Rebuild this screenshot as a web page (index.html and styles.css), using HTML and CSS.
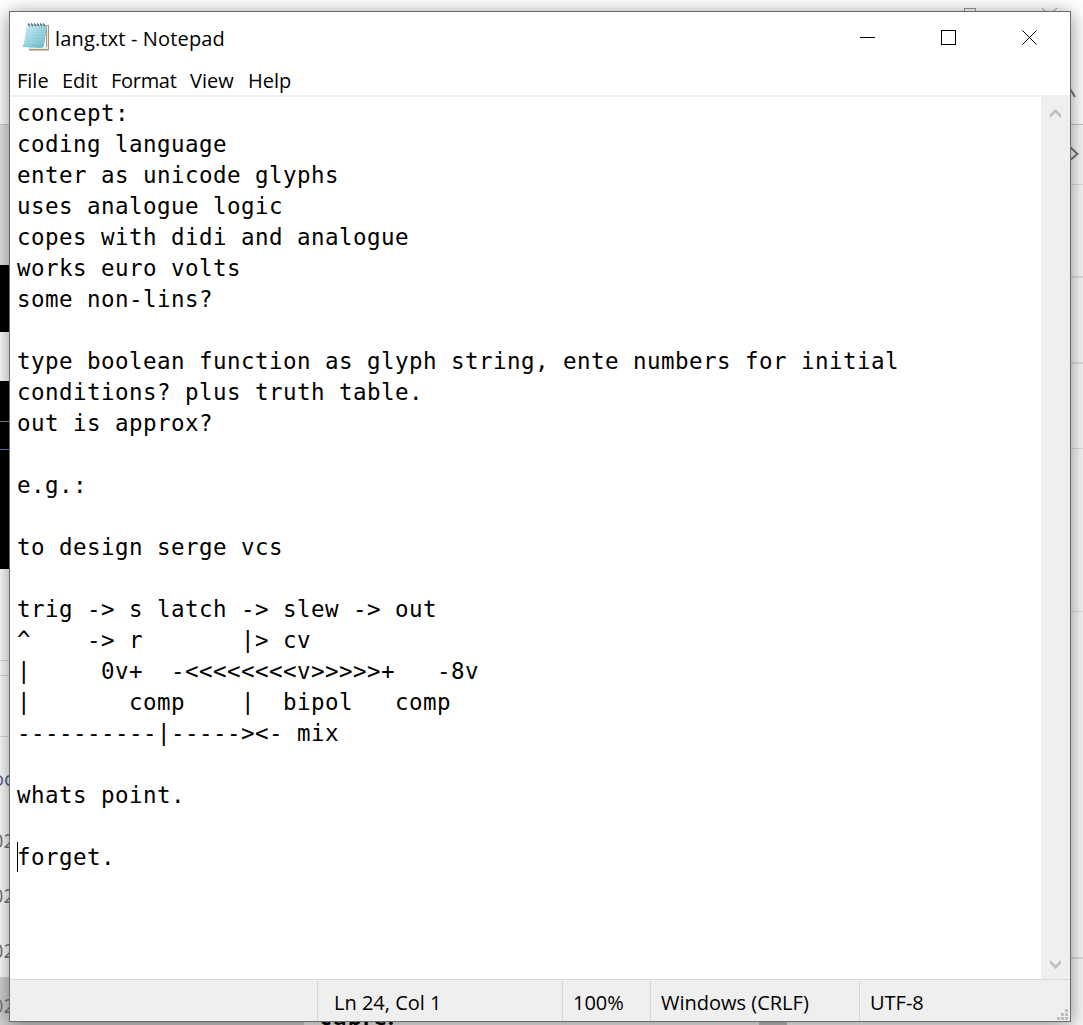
FILE: index.html
```html
<!DOCTYPE html>
<html lang="en">
<head>
<meta charset="utf-8">
<title>lang.txt - Notepad</title>
<link rel="stylesheet" href="styles.css">
</head>
<body>
<div class="desktop">
  <svg class="backdrop" width="1083" height="1025" viewBox="0 0 1083 1025" shape-rendering="crispEdges">
    <rect width="1083" height="1025" fill="#fff"/>
    <rect y="125" width="12" height="140" fill="#e4e4e4"/>
    <rect y="124" width="12" height="1" fill="#ccc"/>
    <rect y="265" width="12" height="67" fill="#000"/>
    <rect y="381" width="12" height="188" fill="#000"/>
    <rect y="421" width="12" height="1" fill="#888"/>
    <rect y="449" width="12" height="1" fill="#4a86d0"/>
    <path d="M0 660.5H12M0 675.5H12M0 736.5H12" stroke="#ddd"/>
    <rect y="977" width="304" height="48" fill="#d2d2d2"/>
    <rect x="304" y="1015" width="455" height="10" fill="#f8f8f8"/>
    <rect x="759" y="1015" width="28" height="10" fill="#c4c4c4"/>
    <rect x="1065" y="125" width="18" height="900" fill="#f8f8f8"/>
    <path d="M1065 124.5H1083" stroke="#c4c4c4"/>
    <path d="M1065 184.5H1083M1065 448.5H1083M1065 611.5H1083" stroke="#dedede"/>
    <path d="M1065 277H1083M1065 363H1083M1065 958H1083" stroke="#dedede" stroke-width="2"/>
    <path d="M964.5 14V8.500H975.500V14" fill="none" stroke="#999"/>
    <g shape-rendering="auto" fill="none">
      <path d="M1042 8L1049 15L1057 8" stroke="#999"/>
      <path d="M1065 97L1069 87L1075 97" stroke="#777" stroke-width="2"/>
      <path d="M1069 146L1077.500 154L1069 161" stroke="#777" stroke-width="2"/>
    </g>
  </svg>
  <span class="peek peek-link">oc</span>
  <span class="peek peek-a">02</span>
  <span class="peek peek-b">02</span>
  <span class="peek peek-c">02</span>
  <span class="peek peek-d">02</span>
  <span class="peek peek-bottom">cubre:</span>

  <main class="window">
    <header class="titlebar">
      <svg class="app-icon" width="30" height="30" viewBox="0 0 30 30">
        <defs>
          <linearGradient id="page" x1="0" y1="0" x2="1" y2="1">
            <stop offset="0" stop-color="#d2f1f6"/><stop offset=".55" stop-color="#8fcedd"/><stop offset="1" stop-color="#5fb2c6"/>
          </linearGradient>
        </defs>
        <path d="M25 3H28V28.500H8V26H25Z" fill="#a29578"/>
        <path d="M7 25H26V4L27 4V27H7Z" fill="#f0eee3"/>
        <path d="M6 3H26L23 24Q22 26 19 26L1 25Q3 23 4 15Z" fill="url(#page)"/>
        <path d="M5 9H24M5 12H24M4 15H23M4 18H23M3 21H23" stroke="#b7e1e9" stroke-width=".5"/>
        <path d="M7 1.500L9 4M10 1.500L12 4M13 1.500L15 4M16 1.500L18 4M19 1.500L21 4M22 1.500L24 4" stroke="#56676d" stroke-width="1.300"/>
      </svg>
      <h1 class="title">lang.txt - Notepad</h1>
      <div class="controls">
        <svg width="17" height="17" viewBox="0 0 17 17" shape-rendering="crispEdges"><path d="M1 8.500H16" stroke="#000"/></svg>
        <svg width="17" height="17" viewBox="0 0 17 17" shape-rendering="crispEdges"><rect x="1.500" y="1.500" width="14" height="14" fill="none" stroke="#000"/></svg>
        <svg width="17" height="17" viewBox="0 0 17 17"><path d="M1.500 1.500L15.500 15.500M15.500 1.500L1.500 15.500" stroke="#000"/></svg>
      </div>
    </header>
    <nav class="menu">
      <span class="item file">File</span><span class="item edit">Edit</span><span class="item format">Format</span><span class="item view">View</span><span class="item help">Help</span>
    </nav>
    <section class="editor">
      <pre class="text">concept:
coding language
enter as unicode glyphs
uses analogue logic
copes with didi and analogue
works euro volts
some non-lins?

type boolean function as glyph string, ente numbers for initial
conditions? plus truth table.
out is approx?

e.g.:

to design serge vcs

trig -&gt; s latch -&gt; slew -&gt; out
^    -&gt; r       |&gt; cv
|     0v+  -&lt;&lt;&lt;&lt;&lt;&lt;&lt;&lt;v&gt;&gt;&gt;&gt;&gt;+   -8v
|       comp    |  bipol   comp
----------|-----&gt;&lt;- mix

whats point.

<span class="caret"></span>forget.</pre>
      <div class="scrollbar">
        <svg width="11" height="9" viewBox="0 0 11 9"><path d="M0 5.500L5.500 0L11 5.500V9L5.500 3.800L0 9Z" fill="#bfbfbf"/></svg>
        <svg width="11" height="9" viewBox="0 0 11 9"><path d="M0 3.500L5.500 9L11 3.500V0L5.500 5.200L0 0Z" fill="#bfbfbf"/></svg>
      </div>
    </section>
    <footer class="status">
      <span class="cell blank"></span>
      <span class="cell position">Ln 24, Col 1</span>
      <span class="cell zoom">100%</span>
      <span class="cell eol">Windows (CRLF)</span>
      <span class="cell encoding">UTF-8</span>
      <svg class="grip" width="11" height="11" viewBox="0 0 11 11" shape-rendering="crispEdges"><path d="M8 0h3v3h-3zM4 4h3v3h-3zM8 4h3v3h-3zM0 8h3v3h-3zM4 8h3v3h-3zM8 8h3v3h-3z" fill="#bfbfbf"/></svg>
    </footer>
  </main>
</div>
</body>
</html>
```
FILE: styles.css
```css
* { box-sizing: border-box; }
body { margin: 0; overflow: hidden; background: #fff; color: #000; font-family: "Open Sans", "Noto Sans", sans-serif; font-size: 20px; }
.desktop { position: relative; width: 1083px; height: 1025px; padding: 11px 0 0 9px; overflow: hidden; }
.backdrop { position: absolute; left: 0; top: 0; }
.peek { position: absolute; left: -8px; font-size: 20px; line-height: 26px; color: #777; }
.peek-link { top: 766px; color: #4d6793; }
.peek-a { top: 828px; }
.peek-b { top: 883px; }
.peek-c { top: 938px; }
.peek-d { top: 993px; }
.peek-bottom { top: 1003px; left: 320px; color: #000; font-size: 22px; font-weight: 700; letter-spacing: 1px; }

.window { position: relative; display: flex; flex-direction: column; width: 1062px; height: 1011px; border: 1px solid #6b6b6b; background: #fff; box-shadow: 0 3px 18px rgba(0, 0, 0, .46); }
.titlebar { display: flex; align-items: center; height: 52px; padding: 0 32px 0 12px; }
.app-icon { margin: -2px 0 0 -1px; }
.title { margin: 2px 0 0 4px; font-size: 20px; font-weight: 400; line-height: 28px; letter-spacing: .16px; white-space: pre; }
.controls { display: flex; gap: 64px; margin: -2px 0 0 auto; }
.controls svg { display: block; }
.menu { display: flex; height: 31px; line-height: 34px; padding-left: 7px; }
.item { white-space: nowrap; }
.file { width: 45px; }
.edit { width: 49px; }
.format { width: 79px; letter-spacing: -.3px; }
.view { width: 58px; }

.editor { display: flex; flex: 1; min-height: 0; border-top: 2px solid #efefef; }
.text { flex: 1; margin: 0; padding: 1px 0 0 7px; font: 22.5px/31px "DejaVu Sans Mono", monospace; letter-spacing: .454px; }
.caret { display: inline-block; width: 1px; height: 30px; margin-right: -1px; background: #000; vertical-align: -7px; }
.scrollbar { display: flex; flex-direction: column; justify-content: space-between; align-items: center; width: 29px; padding: 12px 0 10px; background: #efefef; }

.status { position: relative; display: flex; height: 42px; padding-top: 1px; border-top: 1px solid #d7d7d7; background: #efefef; line-height: 44px; }
.cell { white-space: nowrap; }
.cell + .cell { border-left: 1px solid #d7d7d7; }
.blank { width: 307px; }
.position { width: 245px; padding-left: 16px; }
.zoom { width: 88px; padding-left: 10px; }
.eol { width: 209px; padding-left: 10px; }
.encoding { padding-left: 10px; }
.grip { position: absolute; right: 2px; bottom: 1px; }
```
